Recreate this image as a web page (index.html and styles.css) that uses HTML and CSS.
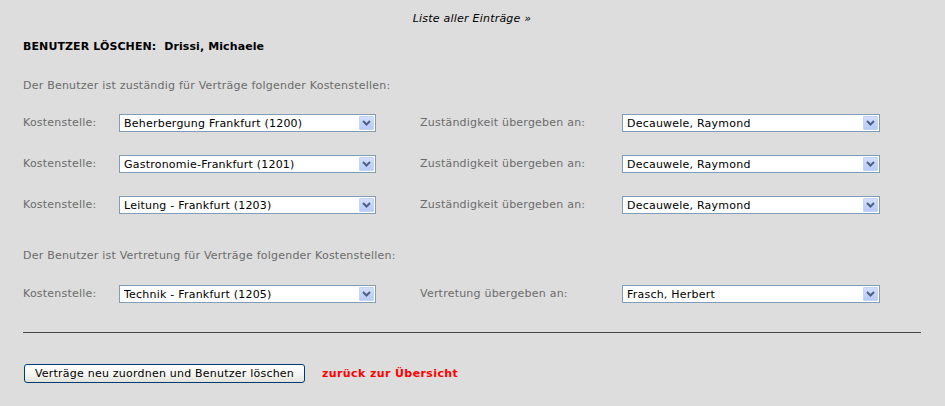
FILE: index.html
```html
<!DOCTYPE html>
<html lang="de">
<head>
<meta charset="utf-8">
<title>Benutzer löschen</title>
<link rel="stylesheet" href="styles.css">
</head>
<body>
<div class="page">
  <p class="toplink"><a href="#">Liste aller Einträge »</a></p>
  <h1 class="title">BENUTZER LÖSCHEN:&nbsp; Drissi, Michaele</h1>

  <p class="section">Der Benutzer ist zuständig für Verträge folgender Kostenstellen:</p>
  <div class="rows">
    <div class="row">
      <span class="label">Kostenstelle:</span>
      <div class="select"><span class="val">Beherbergung Frankfurt (1200)</span><span class="arrow"><svg width="9" height="6" viewBox="0 0 9 6"><path d="M1 1 L4.5 4.5 L8 1" fill="none" stroke="#4d6185" stroke-width="2"/></svg></span></div>
      <span class="label">Zuständigkeit übergeben an:</span>
      <div class="select"><span class="val">Decauwele, Raymond</span><span class="arrow"><svg width="9" height="6" viewBox="0 0 9 6"><path d="M1 1 L4.5 4.5 L8 1" fill="none" stroke="#4d6185" stroke-width="2"/></svg></span></div>
    </div>
    <div class="row">
      <span class="label">Kostenstelle:</span>
      <div class="select"><span class="val">Gastronomie-Frankfurt (1201)</span><span class="arrow"><svg width="9" height="6" viewBox="0 0 9 6"><path d="M1 1 L4.5 4.5 L8 1" fill="none" stroke="#4d6185" stroke-width="2"/></svg></span></div>
      <span class="label">Zuständigkeit übergeben an:</span>
      <div class="select"><span class="val">Decauwele, Raymond</span><span class="arrow"><svg width="9" height="6" viewBox="0 0 9 6"><path d="M1 1 L4.5 4.5 L8 1" fill="none" stroke="#4d6185" stroke-width="2"/></svg></span></div>
    </div>
    <div class="row">
      <span class="label">Kostenstelle:</span>
      <div class="select"><span class="val">Leitung - Frankfurt (1203)</span><span class="arrow"><svg width="9" height="6" viewBox="0 0 9 6"><path d="M1 1 L4.5 4.5 L8 1" fill="none" stroke="#4d6185" stroke-width="2"/></svg></span></div>
      <span class="label">Zuständigkeit übergeben an:</span>
      <div class="select"><span class="val">Decauwele, Raymond</span><span class="arrow"><svg width="9" height="6" viewBox="0 0 9 6"><path d="M1 1 L4.5 4.5 L8 1" fill="none" stroke="#4d6185" stroke-width="2"/></svg></span></div>
    </div>
  </div>

  <p class="section section2">Der Benutzer ist Vertretung für Verträge folgender Kostenstellen:</p>
  <div class="rows rows2">
    <div class="row">
      <span class="label">Kostenstelle:</span>
      <div class="select"><span class="val">Technik - Frankfurt (1205)</span><span class="arrow"><svg width="9" height="6" viewBox="0 0 9 6"><path d="M1 1 L4.5 4.5 L8 1" fill="none" stroke="#4d6185" stroke-width="2"/></svg></span></div>
      <span class="label">Vertretung übergeben an:</span>
      <div class="select"><span class="val">Frasch, Herbert</span><span class="arrow"><svg width="9" height="6" viewBox="0 0 9 6"><path d="M1 1 L4.5 4.5 L8 1" fill="none" stroke="#4d6185" stroke-width="2"/></svg></span></div>
    </div>
  </div>

  <hr class="rule">

  <div class="actions">
    <button class="btn" type="button">Verträge neu zuordnen und Benutzer löschen</button>
    <a class="back" href="#">zurück zur Übersicht</a>
  </div>
</div>
</body>
</html>
```

FILE: styles.css
```css
html, body {
  margin: 0;
  padding: 0;
  background: #dddddd;
}

body {
  font-family: "DejaVu Sans", Verdana, sans-serif;
  font-size: 11px;
  letter-spacing: 0.22px;
  color: #000;
}

.page {
  padding: 0 24px 0 23px;
}

.toplink {
  margin: 12px 0 0;
  line-height: 14px;
  text-align: center;
}

.toplink a {
  color: #000;
  font-style: italic;
  text-decoration: none;
}

.title {
  margin: 14px 0 0;
  font-size: 11px;
  font-weight: bold;
  letter-spacing: 0.1px;
  line-height: 14px;
}

.section {
  margin: 25px 0 0;
  line-height: 14px;
  color: #6b6b6b;
}

.section2 {
  margin-top: 35px;
}

.rows {
  margin-top: 21px;
  display: flex;
  flex-direction: column;
  gap: 23px;
}

.rows2 {
  margin-top: 22px;
}

.row {
  display: grid;
  grid-template-columns: 96px 257px 246px 258px;
  align-items: center;
  height: 18px;
}

.row .label:nth-child(3) {
  padding-left: 44px;
}

.label {
  color: #6b6b6b;
  line-height: 14px;
  white-space: nowrap;
  overflow: hidden;
}

.select {
  box-sizing: border-box;
  height: 18px;
  border: 1px solid #7f9db9;
  background: #fff;
  display: flex;
  align-items: center;
  padding: 0 1px 0 4px;
}

.val {
  flex: 1;
  line-height: 15px;
  white-space: nowrap;
  overflow: hidden;
}

.arrow {
  box-sizing: border-box;
  width: 15px;
  height: 14px;
  display: flex;
  align-items: center;
  justify-content: center;
  background: linear-gradient(#d2defc, #b8cbf6);
  border: 1px solid #c6d4f4;
  border-radius: 1px;
}

.rule {
  margin: 29px 0 0;
  border: 0;
  height: 1px;
  background: #474747;
}

.actions {
  margin-top: 31px;
  display: flex;
  align-items: center;
  gap: 17px;
}

.btn {
  box-sizing: border-box;
  margin-left: 1px;
  width: 281px;
  height: 19px;
  padding: 0;
  font-family: "DejaVu Sans", Verdana, sans-serif;
  font-size: 11px;
  letter-spacing: 0.22px;
  color: #000;
  border: 1px solid #003c74;
  border-radius: 3px;
  background: linear-gradient(#ffffff, #f4f4f0 60%, #e3e2da);
  line-height: 15px;
}

.back {
  color: #ff0000;
  font-weight: bold;
  letter-spacing: 0.4px;
  text-decoration: none;
}
```
